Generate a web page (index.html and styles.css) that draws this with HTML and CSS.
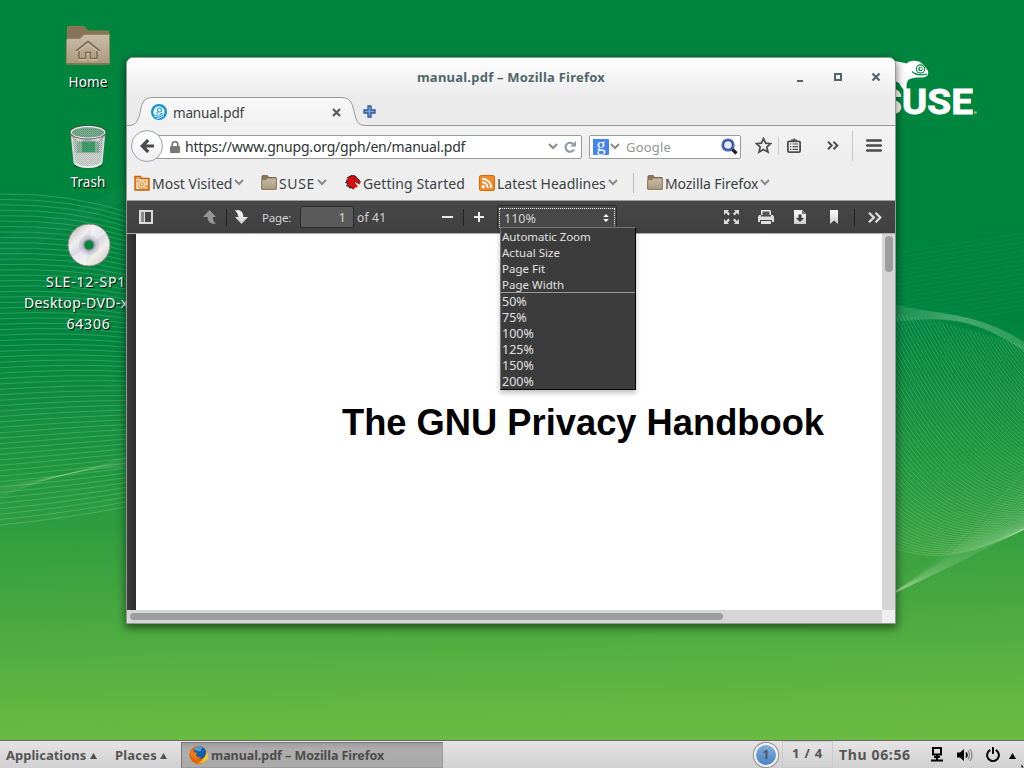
FILE: index.html
```html
<!DOCTYPE html>
<html lang="en">
<head>
<meta charset="utf-8">
<title>Desktop</title>
<link rel="stylesheet" href="styles.css">
</head>
<body>
<svg width="0" height="0" class="defs" aria-hidden="true">
  <defs>
    <linearGradient id="fold" x1="0" y1="0" x2="0" y2="1"><stop offset="0" stop-color="#c9bda9"/><stop offset="1" stop-color="#a9997f"/></linearGradient>
    <linearGradient id="light" x1="0" y1="0" x2="0" y2="1"><stop offset="0" stop-color="#fff"/><stop offset="1" stop-color="#ccc"/></linearGradient>
    <linearGradient id="tabfill" x1="0" y1="0" x2="0" y2="1"><stop offset="0" stop-color="#f9f9f9"/><stop offset="1" stop-color="#f0f0f0"/></linearGradient>
    <linearGradient id="metal"><stop offset="0" stop-color="#777"/><stop offset=".2" stop-color="#ddd"/><stop offset=".5" stop-color="#aaa"/><stop offset=".8" stop-color="#e5e5e5"/><stop offset="1" stop-color="#777"/></linearGradient>
    <linearGradient id="disc" x1="0" y1="0" x2="1" y2="1"><stop offset="0" stop-color="#aaa"/><stop offset=".3" stop-color="#eee"/><stop offset=".5" stop-color="#d0cede"/><stop offset=".7" stop-color="#efefe8"/><stop offset="1" stop-color="#bbb"/></linearGradient>
    <pattern id="mesh" width="2" height="2" patternUnits="userSpaceOnUse"><rect width="2" height="2" fill="#c9d0ca"/><rect width="1" height="1" fill="#8b958d"/><rect x="1" y="1" width="1" height="1" fill="#9fa6a0"/></pattern>
    <symbol id="folder" viewBox="0 0 16 15"><path d="M1 14V1.500Q1 .7 1.800.7H6.500L7.500 2.500H15V14z" fill="#8d7a61" stroke="#765b39"/><path d="M.7 14.300V5.500Q.7 4.700 1.500 4.700H5L6.500 3H15.300V14.300z" fill="url(#fold)" stroke="#8b7350" stroke-width=".9"/></symbol>
    <symbol id="chev" viewBox="0 0 10 7"><path d="M1 1L5 5L9 1" fill="none" stroke="#8a8a85" stroke-width="2"/></symbol>
  </defs>
</svg>
<div class="desktop">
  <svg class="wall" id="waves" width="1024" height="740"></svg>
  <svg class="logo" width="98" height="60" viewBox="0 0 98 60">
    <path d="M0 4H14Q20 5 26 6.500Q28 3 36 4Q41 5 45 11Q49 15 46 19Q43 21 37 20.500Q31 20 27 23Q25 27 25.500 31Q26 34 23 33Q20 30 18 26L14 24H0z" fill="#fff"/>
    <circle cx="39.500" cy="12" r="4.700" fill="#00853f"/><circle cx="39.500" cy="12" r="3.600" fill="#fff"/><circle cx="39.500" cy="12" r="2.300" fill="#00853f"/><circle cx="39.800" cy="11.700" r="1.200" fill="#fff"/>
    <path d="M31 14.500Q36 19.500 46 17" fill="none" stroke="#00853f" stroke-width="1.200"/>
    <text x="-3" y="56.800" class="suse" textLength="95" lengthAdjust="spacingAndGlyphs">SUSE</text>
    <circle cx="94.500" cy="55.500" r="1.300" fill="#8cc9a6"/>
  </svg>

  <div class="icons">
    <div class="dicon home">
      <svg width="46" height="42" viewBox="0 0 46 42"><path d="M2.500 14V3Q2.500 1.500 4 1.500H19L23 6H43.500V39H2.500z" fill="#85735a" stroke="#9c7a46"/><path d="M1.500 39V15Q1.500 13.500 3 13.500H15L19 9.500H44.500V39z" fill="url(#fold)" stroke="#9a8358"/><path d="M2 38.800H44" stroke="#7f6c4d"/><path d="M11 26L23 16.500L35 26M14 26V33.500H20.500V27.500H25.500V33.500H32V26" fill="none" stroke="#dacfba" stroke-width="2" transform="translate(0 1)"/><path d="M11 26L23 16.500L35 26M14 26V33.500H20.500V27.500H25.500V33.500H32V26" fill="none" stroke="#7f6c50" stroke-width="1.700"/></svg>
      <span class="t">Home</span>
    </div>
    <div class="dicon trash">
      <svg width="38" height="44" viewBox="0 0 38 44"><ellipse cx="19" cy="41" rx="15" ry="2.500" fill="#005a28" opacity=".6"/><path d="M2.500 8L5 39Q10 43 19 43T33 39L35.500 8z" fill="url(#mesh)"/><path d="M13 16H26V27H13z" fill="#14904d" opacity=".75"/><path d="M8 17H13V27H26V17H30V28H8z" fill="#5fa37c" opacity=".5"/><path d="M6 28H32L32 38Q27 42 19 42T6 38z" fill="#ddd" opacity=".45"/><path d="M2.800 10L5.500 38M35.200 10L32.500 38" stroke="#d5d5d5" stroke-width="2"/><path d="M5.500 38Q10 42 19 42T32.500 38" stroke="#e8e8e8" stroke-width="2" fill="none"/><ellipse cx="19" cy="7.500" rx="16.500" ry="5.500" fill="#338f5c"/><ellipse cx="19" cy="7.500" rx="16.500" ry="5.500" fill="url(#mesh)" opacity=".5"/><path d="M2 8Q4 12 19 12.500T36 8V11Q32 16.500 19 16.500T2 11z" fill="url(#metal)"/><ellipse cx="19" cy="7.500" rx="17" ry="6" fill="none" stroke="#eee" stroke-width="1.600"/><ellipse cx="19" cy="7.200" rx="18" ry="6.900" fill="none" stroke="#444" stroke-width=".8"/></svg>
      <span class="t">Trash</span>
    </div>
    <div class="dicon dvd">
      <svg width="44" height="44" viewBox="0 0 44 44"><circle cx="22" cy="22.500" r="21" fill="#333" opacity=".5"/><circle cx="22" cy="22" r="21" fill="url(#disc)" stroke="#868686"/><path d="M22 22L25 1.500A21 21 0 0 1 39 10zM22 22L5 34A21 21 0 0 0 18 42.500z" fill="#fff" opacity=".5"/><circle cx="22" cy="22" r="10" fill="#aaa7c8" opacity=".35"/><circle cx="22" cy="22" r="7" fill="#b4b2ba"/><circle cx="22" cy="22" r="5" fill="#00853f" stroke="#888"/></svg>
      <span class="t sp">SLE-12-SP1</span><span class="t long">Desktop-DVD-x86_</span><span class="t">64306</span>
    </div>
  </div>

  <main class="window">
    <div class="head">
      <div class="titlebar"><span class="title t">manual.pdf – Mozilla Firefox</span>
        <svg class="wbtns" width="86" height="12" viewBox="0 0 86 12"><path d="M1 9H7" stroke="#51666b" stroke-width="2"/><rect x="39" y="2" width="6" height="6" fill="none" stroke="#51666b" stroke-width="2"/><path d="M76.500 1.500L83.500 8.500M83.500 1.500L76.500 8.500" stroke="#51666b" stroke-width="2.200"/></svg>
      </div>
      <div class="tabs">
        <div class="tab">
          <svg class="tabshape" width="244" height="30" viewBox="0 0 244 30"><path d="M0 28.500C8 28.500 10 26 12.500 18C15 7 15 .5 26 .5H214C225 .5 225 7 228 18C230 26 232 28.500 240 28.500V30H0z" fill="url(#tabfill)"/><path d="M0 28.500C8 28.500 10 26 12.500 18C15 7 15 .5 26 .5H214C225 .5 225 7 228 18C230 26 232 28.500 240 28.500H244" fill="none" stroke="#999"/></svg>
          <svg width="16" height="16" viewBox="0 0 16 16"><circle cx="8" cy="8" r="8" fill="#0d93d8"/><path d="M2.500 9.500A5.800 5.800 0 0 1 8 2.300A5.800 5.800 0 0 1 13.700 8.500L11.500 9.500Q10.500 8.500 9.800 9L9 10.500L3 11z" fill="#fff"/><circle cx="8.500" cy="6" r="2.500" fill="#0d93d8"/><circle cx="8.500" cy="6" r="1.500" fill="#fff"/><path d="M4.500 9.700Q5.500 8 7 8L7.500 9.300z" fill="#0d93d8"/><path d="M3 12.500Q9 12.500 13.500 9.500M5.500 14.500Q10 14 13 11.500" stroke="#fff" fill="none" stroke-width="1"/></svg>
          <span class="tabtext t">manual.pdf</span>
          <svg class="tabx" width="9" height="9" viewBox="0 0 9 9"><path d="M1 1L8 8M8 1L1 8" stroke="#555b5c" stroke-width="2.200"/></svg>
        </div>
        <svg class="plus" width="13" height="13" viewBox="0 0 13 13"><path d="M5 1H8V5H12V8H8V12H5V8H1V5H5z" fill="#7da3d8" stroke="#2b58a0" stroke-width="1.300"/></svg>
      </div>
    </div>
    <div class="nav">
      <div class="url">
        <svg class="lock" width="10" height="12" viewBox="0 0 10 12"><path d="M2.200 6V3.500A2.800 2.800 0 0 1 7.800 3.500V6" fill="none" stroke="#777" stroke-width="1.600"/><rect y="5" width="10" height="7" rx="1" fill="#777"/></svg>
        <span class="urltext t">https://www.gnupg.org/gph/en/manual.pdf</span>
        <svg class="uchev" width="10" height="7"><use href="#chev"/></svg>
        <svg class="reload" width="12" height="12" viewBox="0 0 12 12"><path d="M9.200 3A4.500 4.500 0 1 0 10 8.500" fill="none" stroke="#8f9ca8" stroke-width="2.200"/><path d="M6 5.500H12V0z" fill="#8f9ca8"/></svg>
      </div>
      <div class="back"><svg width="14" height="14" viewBox="0 0 14 14"><path d="M8.200 1L2.200 7L8.200 13M2.500 7H14" fill="none" stroke="#4a4a4a" stroke-width="3.200"/></svg></div>
      <div class="search">
        <span class="g">g</span><svg class="gchev" width="10" height="7"><use href="#chev"/></svg>
        <span class="gtext t">Google</span>
        <svg class="mag" width="17" height="17" viewBox="0 0 17 17"><path d="M10.500 10.500L15.500 15.500" stroke="#222" stroke-width="3.200"/><circle cx="7" cy="7" r="5.200" fill="#e8ecf8" stroke="#2f4fa5" stroke-width="2.800"/><circle cx="7" cy="7" r="5.700" fill="none" stroke="#6b8cd0" stroke-width=".7"/></svg>
      </div>
      <svg class="star" width="17" height="17" viewBox="0 0 17 17"><path d="M8.500 1.500L10.600 6.200L15.600 6.700L11.800 10L13 15L8.500 12.400L4 15L5.200 10L1.400 6.700L6.400 6.200z" fill="none" stroke="#4c4c4c" stroke-width="1.700"/></svg>
      <i class="s1"></i>
      <svg class="clip" width="14" height="15" viewBox="0 0 14 15"><path d="M4 3V1.500H6L7 0L8 1.500H10V3z" fill="#4c4c4c"/><rect x=".9" y="3.400" width="12.200" height="10.700" rx="1.200" fill="#f0f0f0" stroke="#4c4c4c" stroke-width="1.800"/><path d="M3 6H4.300M3 8.700H4.300M3 11.400H4.300M5.500 6H11M5.500 8.700H11M5.500 11.400H11" stroke="#4c4c4c" stroke-width="1.200"/></svg>
      <svg class="more" width="12" height="9" viewBox="0 0 12 9"><path d="M1 .8L4.800 4.500L1 8.200M6.500 .8L10.300 4.500L6.500 8.200" fill="none" stroke="#4c4c4c" stroke-width="1.900"/></svg>
      <i class="s2"></i>
      <svg class="burger" width="16" height="13" viewBox="0 0 16 13"><path d="M1.200 1.500H14.800M1.200 6.500H14.800M1.200 11.500H14.800" stroke="#4a4a4a" stroke-width="2.600" stroke-linecap="round"/></svg>
    </div>
    <div class="marks">
      <div class="mk m1"><svg width="16" height="16" viewBox="0 0 16 16"><path d="M1 15V1.500H6.500L7.500 3.500H15V15z" fill="#f0a45c" stroke="#c75e0d" stroke-width="1.400"/><path d="M2 5H14" stroke="#fff" opacity=".8"/><circle cx="7.800" cy="9.300" r="2.700" fill="#e98c3c" stroke="#fff"/><circle cx="7.800" cy="9.300" r="1" fill="#fff"/><path d="M10 11.500L12 13.500M3 7V13.500H6M12.800 6.500V10" stroke="#fff" fill="none"/></svg><span class="t">Most Visited</span><svg width="10" height="7"><use href="#chev"/></svg></div>
      <div class="mk m2"><svg width="16" height="15"><use href="#folder"/></svg><span class="t suselink">SUSE</span><svg width="10" height="7"><use href="#chev"/></svg></div>
      <div class="mk m3"><svg width="16" height="15" viewBox="0 0 16 15"><path d="M3 2.500L6 .8L10 1L13 4L15.500 7L15 9L11 6.500L9.500 7L11 9L13 11.500L10.500 12.500L8.500 14L6 13L4 12L3 9L1.500 7z" fill="#e00b0b"/><path d="M2 3L6 .7L10 .9L13 4L15.500 6.500M1 5L3 5.500L.5 7.500L3 8.500L1.500 11L4 11L4.500 13L7 12.500L8.500 14.300M9 8L10 6.500L12 7.500L14.500 9M8.500 4H10" fill="none" stroke="#111" stroke-width="1"/></svg><span class="t started">Getting Started</span></div>
      <div class="mk m4"><svg width="16" height="16" viewBox="0 0 16 16"><rect x=".5" y=".5" width="15" height="15" rx="1.500" fill="#f28c28" stroke="#d46a0b"/><circle cx="4.300" cy="11.700" r="1.600" fill="#fff"/><path d="M3 7.200A5.800 5.800 0 0 1 8.800 13M3 3.700A9.300 9.300 0 0 1 12.300 13" fill="none" stroke="#fff" stroke-width="1.900"/></svg><span class="t">Latest Headlines</span><svg width="10" height="7"><use href="#chev"/></svg></div>
      <i></i>
      <div class="mk m5"><svg width="16" height="15"><use href="#folder"/></svg><span class="t">Mozilla Firefox</span><svg width="10" height="7"><use href="#chev"/></svg></div>
    </div>
    <div class="pdfbar">
      <svg class="p1" width="14" height="14" viewBox="0 0 14 14"><rect x="1" y="1" width="12" height="12" fill="#444" stroke="#ddd" stroke-width="2"/><rect x="2" y="2" width="3" height="10" fill="#888"/><path d="M5.500 2V12" stroke="#ddd"/></svg>
      <svg class="p2" width="14" height="14" viewBox="0 0 14 14"><path d="M6.500 0L13 7H10Q9.500 11 13 13.700H9Q4.500 12 4.500 7H0z" fill="#969696"/></svg>
      <i class="b1"></i>
      <svg class="p3" width="14" height="14" viewBox="0 0 14 14"><path d="M1 .3H5Q9 1 9.500 7H14L7.500 14L1 7H4.500Q4 3 1 .3z" fill="url(#light)"/></svg>
      <span class="page t">Page:</span>
      <span class="num">1</span>
      <span class="of t">of 41</span>
      <svg class="p4" width="11" height="11" viewBox="0 0 11 11"><path d="M0 5H11" stroke="#e8e8e8" stroke-width="2"/></svg>
      <i class="b2"></i>
      <svg class="p5" width="10" height="10" viewBox="0 0 10 10"><path d="M0 5H10M5 0V10" stroke="#eee" stroke-width="2"/></svg>
      <div class="select"><div class="focus"><span class="t">110%</span><svg width="6" height="8" viewBox="0 0 6 8"><path d="M3 0L5.800 3H.2zM3 8L5.800 5H.2z" fill="#fff"/></svg></div>
        <div class="menu">
          <div class="o1">Automatic Zoom</div><div class="o2">Actual Size</div><div class="o2">Page Fit</div><div class="o2">Page Width</div>
          <hr>
          <div class="n">50%</div><div class="n">75%</div><div class="n">100%</div><div class="n">125%</div><div class="n">150%</div><div class="n">200%</div>
        </div>
      </div>
      <svg class="p6" width="15" height="14" viewBox="0 0 15 14"><path d="M0 0H5L3.600 1.400L6 3.800L4.400 5.400L2 3L0 5zM15 0H10L11.400 1.400L9 3.800L10.600 5.400L13 3L15 5zM0 14H5L3.600 12.600L6 10.200L4.400 8.600L2 11L0 9zM15 14H10L11.400 12.600L9 10.200L10.600 8.600L13 11L15 9z" fill="#ddd"/></svg>
      <svg class="p7" width="16" height="14" viewBox="0 0 16 14"><path d="M3 0H12L13 1V5H3z" fill="#eee"/><path d="M4.500 1.500H11.500V5.500H4.500z" fill="#555"/><path d="M1 5H3V6.500H13V5H15L16 7V12H14V10H2V12H0V7z" fill="#ddd"/><path d="M3 11H13V14H3z" fill="#ddd"/></svg>
      <svg class="p8" width="12" height="14" viewBox="0 0 12 14"><path d="M0 0H8L12 4V14H0z" fill="url(#light)"/><path d="M8 0V4H12" fill="#777"/><path d="M4.500 4.500H7.500V8H10L6 12L2 8H4.500z" fill="#3d3d3d"/></svg>
      <svg class="p9" width="8" height="14" viewBox="0 0 8 14"><path d="M0 0H8V14L4 10.500L0 14z" fill="url(#light)"/></svg>
      <i class="b3"></i>
      <svg class="p10" width="14" height="11" viewBox="0 0 14 11"><path d="M1 .8L5.800 5.500L1 10.200M7.500 .8L12.300 5.500L7.500 10.200" fill="none" stroke="#ddd" stroke-width="2.300"/></svg>
    </div>
    <div class="view">
      <div class="gutter"></div>
      <div class="paper"><h1 class="t">The GNU Privacy Handbook</h1></div>
      <div class="vscroll"><b></b></div>
    </div>
    <div class="hscroll"><b></b><i></i></div>
  </main>

  <footer class="panel">
    <span class="a1 t">Applications</span><svg class="tri" width="7" height="6"><path d="M3.500 0L7 6H0z" fill="#505050"/></svg>
    <span class="a2 t">Places</span><svg class="tri" width="7" height="6"><path d="M3.500 0L7 6H0z" fill="#505050"/></svg>
    <div class="task"><svg width="20" height="18" viewBox="0 0 20 18"><circle cx="9.500" cy="9" r="9" fill="#e66000"/><path d="M15 3Q20 7 19 12Q15 18 9 17Q14 15 15 10z" fill="#ffcb1f"/><circle cx="11" cy="6.800" r="6.200" fill="#1c5dab"/><path d="M5 3Q9 -1 14 2Q11 3 12 5Q8 6 5 3" fill="#3ba7df"/><path d="M1.500 3Q4 6 8 7L7 9Q8 12 12 11Q9 15 5 13Q0 9 1.500 3z" fill="#ef7813"/></svg><span class="t">manual.pdf – Mozilla Firefox</span></div>
    <div class="badge">1</div>
    <div class="ws"><span class="t">1 / 4</span></div>
    <span class="clock t">Thu 06:56</span>
    <svg class="net" width="12" height="15" viewBox="0 0 12 15"><rect x="2" y="1" width="8" height="6.500" fill="none" stroke="#000" stroke-width="2"/><path d="M3 10H9M6 8V14M0 13.500H12" stroke="#000" stroke-width="2"/></svg>
    <svg class="vol" width="16" height="14" viewBox="0 0 16 14"><path d="M0 4.500H3L7 1V13L3 9.500H0z"/><path d="M9 4.500Q11 7 9 9.500" fill="none" stroke="#000" stroke-width="1.500"/><path d="M11 2.500Q14 7 11 11.500M13 1Q17 7 13 13" fill="none" stroke="#888" stroke-width="1.300"/></svg>
    <svg class="pow" width="14" height="15" viewBox="0 0 14 15"><path d="M4.300 3A5.900 5.900 0 1 0 9.700 3" fill="none" stroke="#000" stroke-width="2"/><path d="M7 0V7" stroke="#000" stroke-width="2"/></svg>
    <svg class="tri2" width="7" height="6"><path d="M3.500 0L7 6H0z"/></svg>
  </footer>
  <svg class="pointer" width="3" height="5" viewBox="0 0 3 5"><path d="M0 0L3 4V5H0z" stroke="#fff" stroke-width=".8"/></svg>
</div>
<script src="waves.js"></script>
</body>
</html>
```
FILE: styles.css
```css
* { box-sizing: border-box; }
body { margin: 0; overflow: hidden; font-family: "Noto Sans", "Open Sans", sans-serif; font-size: 14px; color: #3c4143; }
svg { display: block; flex: none; }
.defs { position: absolute; }
.t { white-space: nowrap; }
.desktop { position: relative; width: 1024px; height: 768px; overflow: hidden; background: linear-gradient(179deg, #00853f 0, #00853f 340px, #22983f 480px, #46a740 610px, #66b841 725px, #6aba42 740px); }
.wall { position: absolute; left: 0; top: 0; }
.logo { position: absolute; left: 881px; top: 57px; }
.pointer { position: absolute; right: 0; bottom: 0; }
.suse { font: bold 35px Roboto, sans-serif; fill: #fff; stroke: #fff; stroke-width: .8px; }
.icons { display: flex; flex-direction: column; position: absolute; left: 13px; top: 25px; width: 150px; }
.dicon { display: flex; flex-direction: column; align-items: center; color: #fff; text-shadow: 1px 1px 1px #000; font-size: 13.500px; line-height: 21px; letter-spacing: .1px; }
.home { height: 100px; }
.trash { height: 98px; }
.home svg { margin-bottom: 5px; }
.trash svg { margin-bottom: 3px; }
.dvd { padding-left: 1px; }
.dvd svg { margin-bottom: 4px; }
.dvd span { font-size: 14px; letter-spacing: .8px; }
.dvd .sp { padding-right: 5px; }
.dvd .long { letter-spacing: .4px; padding-right: 1px; }

.window { position: absolute; left: 126px; top: 57px; width: 770px; height: 567px; border: 1px solid #969896; border-radius: 7px 7px 0 0; background: #ededed; box-shadow: 0 3px 9px 1px rgba(0,0,0,.5); display: flex; flex-direction: column; }
.head { height: 68px; border-radius: 6px 6px 0 0; background: linear-gradient(#fff, #ebebeb 40px); border-bottom: 1px solid #999; }
.titlebar { height: 39px; display: flex; align-items: center; justify-content: center; position: relative; padding-bottom: 2px; }
.title { color: #51666b; font-weight: bold; font-size: 13px; letter-spacing: .23px; }
.wbtns { position: absolute; right: 13px; top: 14px; }
.tabs { display: flex; height: 30px; }
.tab { position: relative; width: 244px; height: 30px; display: flex; align-items: center; padding-left: 24px; }
.tab > * { position: relative; }
.tab .tabshape { position: absolute; left: 0; top: 0; }
.tabtext { margin: 2px 0 0 6px; width: 159px; font-size: 13.500px; letter-spacing: -.18px; }
.plus { margin: 8px 0 0 -8px; }
.nav { height: 39px; display: flex; align-items: center; background: linear-gradient(#f2f2f2, #ededed); position: relative; padding-left: 20px; }
.back { position: absolute; left: 4px; top: 4px; width: 32px; height: 32px; border: 1px solid #9da5b0; border-radius: 50%; background: linear-gradient(#fff, #f0f0f0); display: grid; place-items: center; }
.url { width: 435px; height: 24px; border: 1px solid #999; border-radius: 2px; background: #fff; display: flex; align-items: center; padding-left: 22px; margin-top: 2px; }
.urltext { margin-left: 5px; width: 363px; color: #2e3436; letter-spacing: -.19px; }
.reload { margin-left: 6px; }
.search { width: 152px; height: 24px; margin: 2px 0 0 7px; border: 1px solid #999; border-radius: 2px; background: #fff; display: flex; align-items: center; padding-left: 3px; }
.g { width: 16px; height: 16px; background: #4484f0; color: #fff; border-radius: 1px; font: 18px/12px "Liberation Serif", serif; text-align: center; }
.gchev { margin-left: 1px; }
.gtext { color: #939593; margin-left: 6px; width: 95px; font-size: 13px; letter-spacing: .18px; }
.star { margin-left: 14px; }
.s1 { width: 1px; height: 18px; background: #c5c9ce; margin-left: 6px; }
.clip { margin-left: 8px; }
.more { margin-left: 26px; }
.s2 { width: 1px; height: 30px; background: #c0c8d2; margin-left: 13px; }
.burger { margin-left: 13px; }
.marks { height: 36px; display: flex; align-items: center; background: #eee; border-bottom: 1px solid #a0a0a0; position: relative; padding-left: 7px; }
.mk { display: flex; align-items: center; height: 20px; }
.mk span { margin: 2px 2px 0 2px; }
.mk .suselink { letter-spacing: .65px; }
.mk .started { letter-spacing: .09px; }
.marks i { width: 1px; height: 20px; background: #bbb; margin: 0 13px 0 15px; }
.m1 { width: 127px; } .m2 { width: 84px; } .m3 { width: 134px; } .m4 { width: 139px; }
.m5 { letter-spacing: -.08px; }

.pdfbar { height: 32px; display: flex; align-items: center; background: linear-gradient(#474747, #404040); color: #d5d5d5; font-size: 12px; padding-left: 12px; position: relative; z-index: 2; }
.pdfbar i { width: 1px; height: 17px; background: #222; }
.p2 { margin-left: 50px; } .b1 { margin-left: 9px; } .p3 { margin-left: 7px; }
.page { margin-left: 14px; width: 37px; font-size: 11.500px; letter-spacing: -.2px; }
.num { width: 54px; height: 22px; border: 1px solid #2b2b2b; border-radius: 2px; background: #5a5a5a; text-align: right; padding-right: 7px; line-height: 20px; font-size: 13px; margin-left: 1px; }
.of { margin-left: 3px; width: 84px; letter-spacing: .2px; }
.p4 { margin-left: 1px; } .b2 { margin-left: 10px; } .p5 { margin-left: 10px; }
.select { width: 120px; height: 24px; margin-left: 13px; border: 1px solid #2d2d2d; border-radius: 2px; background: #484848; position: relative; padding: 2px 1px 0; }
.focus { border: 1px dotted #fff; height: 20px; display: flex; align-items: center; justify-content: space-between; padding: 0 5px 0 4px; font-size: 12.500px; }
.menu { position: absolute; left: 2px; top: 21px; width: 136px; height: 163px; background: #3c3c3c; border: 1px solid #000; border-left-color: #777; border-top-color: #777; box-shadow: 0 3px 5px rgba(0,0,0,.25); padding-left: 1px; font-size: 11.500px; color: #e0e0e0; }
.menu div { height: 16px; line-height: 18px; white-space: nowrap; }
.menu .o1 { letter-spacing: -.07px; }
.menu .o2 { letter-spacing: .02px; }
.menu .n { font-size: 12.500px; line-height: 17px; }
.menu hr { border: 0; height: 1px; background: #999; margin: 0 0 0 -1px; }
.p6 { margin-left: 107px; } .p7 { margin-left: 19px; } .p8 { margin-left: 20px; } .p9 { margin-left: 24px; } .b3 { margin-left: 16px; } .p10 { margin-left: 13px; }
.view { height: 377px; display: flex; border-top: 1px solid #aaa; }
.gutter { width: 9px; background: linear-gradient(90deg, #3d3d3d, #2b2b2b); }
.paper { flex: 1; background: #fff; padding: 166px 0 0 206px; }
h1 { margin: 0; font: bold 36.300px/46px "Liberation Sans", Arial, sans-serif; color: #000; }
.vscroll { width: 13px; background: #d6d6d6; padding: 2px 3px; }
.vscroll b { display: block; height: 36px; width: 8px; border-radius: 4px; background: #9b9d9e; }
.hscroll { height: 13px; background: #d6d6d6; display: flex; justify-content: space-between; padding-left: 3px; }
.hscroll b { width: 593px; height: 7px; margin-top: 3px; border-radius: 4px; background: #9b9d9e; }
.hscroll i { width: 13px; background: #eee; }

.panel { position: absolute; left: 0; top: 740px; width: 1024px; height: 28px; border-top: 1px solid #6b6b6b; background: linear-gradient(#e4e4e4, #d0d0d0); display: flex; align-items: center; font-weight: bold; color: #555; font-size: 13px; padding-left: 6px; }
.a1 { width: 84px; } .a2 { width: 45px; margin-left: 18px; letter-spacing: .2px; }
.tri { margin-top: 3px; }
.task { width: 262px; height: 26px; margin-left: 14px; background: linear-gradient(#9e9e9e, #adadad 6px, #a9a9a9); border: 1px solid #777; border-right-color: #999; border-bottom-color: #999; display: flex; align-items: center; padding-left: 7px; color: #4c4c4c; }
.task span { margin: 2px 0 0 2px; font-size: 12.500px; letter-spacing: -.05px; }
.badge { width: 24px; height: 24px; border-radius: 50%; border: 2px solid #f1f1f1; box-shadow: 0 0 1px 1px #888; background: linear-gradient(#82aede, #4c83c3); text-align: center; line-height: 20px; font-size: 12px; margin-left: 311px; }
.ws { width: 51px; height: 27px; margin-left: 4px; border: 1px solid #c9c9c9; display: grid; place-items: center; letter-spacing: .8px; padding-bottom: 3px; }
.clock { margin-left: 6px; width: 92px; font-size: 14px; letter-spacing: .65px; }
.vol { margin-left: 14px; } .pow { margin-left: 13px; } .tri2 { margin: 3px 0 0 9px; }
```
FILE: waves.js
```js
// Draws the fine line families of the wallpaper.
var svg = document.getElementById('waves');
function line(d, o) {
  var p = document.createElementNS('http://www.w3.org/2000/svg', 'path');
  p.setAttribute('d', d);
  p.setAttribute('fill', 'none');
  p.setAttribute('stroke', '#d5f0d0');
  p.setAttribute('stroke-width', '.8');
  p.setAttribute('stroke-opacity', o);
  svg.appendChild(p);
}
var i, t;
for (i = 0; i < 62; i++) {
  t = i / 61;
  line('M0 ' + (194 + 331 * t) + ' Q70 ' + (193 + 325 * t) + ' 130 ' + (213 + 293 * t), 0.27);
}
for (i = 0; i < 14; i++) {
  line('M0 ' + (238 + i * 2) + ' Q70 ' + (215 + i) + ' 130 ' + (184 + i), 0.05);
  line('M0 ' + (485 + i) + ' Q70 ' + (478 - i) + ' 130 ' + (455 + i), 0.08);
}
for (i = 0; i < 76; i++) {
  t = i / 75;
  line('M' + (730 + 300 * t) + ' ' + (298 + 50 * t * t) +
    ' C' + (820 + 280 * t) + ' ' + (500 - 60 * t) + ' ' + (870 + 300 * t) + ' ' + (612 - 145 * t) +
    ' ' + (1030 + 300 * t) + ' ' + (526 - 145 * t), 0.26);
}
for (i = 0; i < 18; i++) {
  t = i / 17;
  line('M880 600 Q' + (950 + 5 * t) + ' ' + (562 + 3 * t) + ' 1030 ' + (464 + 62 * Math.sqrt(t)), 0.16);
  line('M890 ' + (304 + 18 * t) + ' C945 ' + (317 - 1 * t) + ' 975 ' + (310 + 6 * t) + ' 1030 ' + (346 + 9 * t), 0.15);
  line('M890 ' + (254 + 4.5 * i) + ' L1030 ' + (232 + 4.5 * i), 0.06);
}
```
